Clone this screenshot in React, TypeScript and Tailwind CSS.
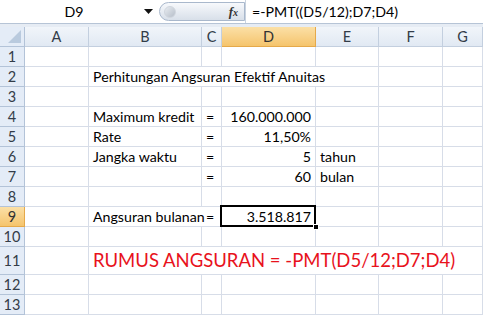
import React from "react";

const font = { fontFamily: "Lato, 'Liberation Sans', sans-serif" };

function Hdr({ children, active }: { children?: React.ReactNode; active?: boolean }) {
  return (
    <div
      className={
        "flex items-center justify-center border-r border-b text-[14.5px] " +
        (active
          ? "bg-gradient-to-b from-[#fbe0a6] to-[#f5c46c] border-[#e5a94a] text-[#333]"
          : "bg-gradient-to-b from-[#f1f5fa] to-[#e1e9f3] border-[#c3cfdf] text-[#333c48]")
      }
    >
      {children}
    </div>
  );
}

function RowH({ n, active }: { n: number; active?: boolean }) {
  return (
    <div
      className={
        "flex items-center justify-center border-r border-b text-[14.5px] " +
        (active
          ? "bg-gradient-to-b from-[#fbe0a6] to-[#f5c46c] border-[#e5a94a] text-[#333]"
          : "bg-[#e4ecf7] border-[#b3c3d8] text-[#333c48]")
      }
    >
      {n}
    </div>
  );
}

function C({
  children,
  span,
  right,
  noR,
  red,
}: {
  children?: React.ReactNode;
  span?: string;
  right?: boolean;
  noR?: boolean;
  red?: boolean;
}) {
  return (
    <div
      className={
        "flex items-center whitespace-nowrap overflow-visible border-b border-[#d7dde8] " +
        (red ? "text-[18.5px] text-[#e8121c] " : "text-[14.2px] text-black ") +
        (noR ? "" : "border-r ") +
        (right ? "justify-end pr-[4px] " : "pl-[4px] ") +
        (span || "")
      }
    >
      {children}
    </div>
  );
}

function EmptyRow({ n }: { n: number }) {
  return (
    <>
      <RowH n={n} />
      <C />
      <C />
      <C />
      <C />
      <C />
      <C />
      <C />
    </>
  );
}

export default function App() {
  return (
    <div className="w-[483px] h-[315px] overflow-hidden bg-white" style={font}>
      {/* Formula bar */}
      <div className="h-[24px] flex items-stretch bg-white border-b border-[#b6c4d6]">
        <div className="w-[159px] flex items-center">
          <span className="flex-1 text-center text-[14.2px] text-black pl-[4px]">D9</span>
          <svg width="9" height="5" viewBox="0 0 9 5" className="mr-[6px]">
            <path d="M0 0h9L4.5 5z" fill="#111" />
          </svg>
        </div>
        <div className="w-[86px] my-[2px] rounded-l-[10px] border border-[#a9b8cc] bg-gradient-to-b from-[#f7f9fc] to-[#d8dfe9] flex items-center justify-between pl-[4px] pr-[6px]">
          <span className="w-[12px] h-[12px] rounded-full bg-gradient-to-br from-[#e8ecf1] to-[#b6bec9] border border-[#d0d6de]" />
          <span
            className="italic text-[13px] text-[#333] font-bold"
            style={{ fontFamily: "'Liberation Serif', serif" }}
          >
            f<span className="text-[10px]">x</span>
          </span>
        </div>
        <div className="flex-1 flex items-center pl-[6px] text-[14.2px] text-black border-l border-[#c8d2df]">
          =-PMT((D5/12);D7;D4)
        </div>
      </div>
      <div className="h-[3px] bg-[#e6ecf4]" />
      {/* Grid */}
      <div className="grid grid-cols-[25px_64px_113px_20px_94px_63px_64px_1fr] grid-rows-[20px_repeat(10,20px)_28px_20px_20px]">
        <div className="border-r border-b border-[#b3c3d8] bg-[#e4ecf7] flex items-end justify-end p-[3px]">
          <svg width="13" height="13" viewBox="0 0 13 13">
            <path d="M13 0V13H0z" fill="#b9cade" />
          </svg>
        </div>
        <Hdr>A</Hdr>
        <Hdr>B</Hdr>
        <Hdr>C</Hdr>
        <Hdr active>D</Hdr>
        <Hdr>E</Hdr>
        <Hdr>F</Hdr>
        <Hdr>G</Hdr>

        <EmptyRow n={1} />

        <RowH n={2} />
        <C />
        <C span="col-span-4">Perhitungan Angsuran Efektif Anuitas</C>
        <C />
        <C />

        <EmptyRow n={3} />

        <RowH n={4} />
        <C />
        <C>Maximum kredit</C>
        <C>=</C>
        <C right>160.000.000</C>
        <C />
        <C />
        <C />

        <RowH n={5} />
        <C />
        <C>Rate</C>
        <C>=</C>
        <C right>11,50%</C>
        <C />
        <C />
        <C />

        <RowH n={6} />
        <C />
        <C>Jangka waktu</C>
        <C>=</C>
        <C right>5</C>
        <C>tahun</C>
        <C />
        <C />

        <RowH n={7} />
        <C />
        <C />
        <C>=</C>
        <C right>60</C>
        <C>bulan</C>
        <C />
        <C />

        <EmptyRow n={8} />

        <RowH n={9} active />
        <C />
        <C noR>Angsuran bulanan</C>
        <C>=</C>
        <div className="relative flex items-center justify-end pr-[4px] border-r border-b border-[#d7dde8] text-[14.2px] text-black">
          3.518.817
          <div className="absolute left-[-2px] top-[-2px] right-[-1px] bottom-[-1px] border-2 border-black" />
          <div className="absolute right-[-4px] bottom-[-4px] w-[6px] h-[6px] bg-black border border-white" />
        </div>
        <C />
        <C />
        <C />

        <EmptyRow n={10} />

        <RowH n={11} />
        <C />
        <C span="col-span-6" red>
          RUMUS ANGSURAN = -PMT(D5/12;D7;D4)
        </C>

        <EmptyRow n={12} />
        <EmptyRow n={13} />
      </div>
    </div>
  );
}
